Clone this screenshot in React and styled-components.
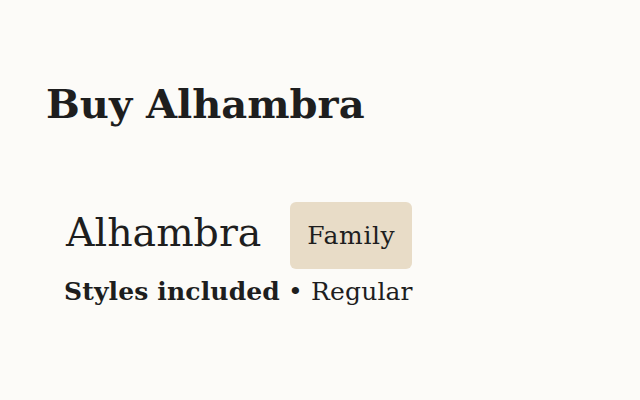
import React from "react";
import styled, { createGlobalStyle } from "styled-components";

const Global = createGlobalStyle`
  html, body {
    margin: 0;
    padding: 0;
    background: #fcfbf8;
  }
  body {
    font-family: "DejaVu Serif", "Liberation Serif", serif;
    color: #1e1e1e;
  }
`;

const Page = styled.main`
  width: 640px;
  height: 400px;
  box-sizing: border-box;
  padding: 80px 46px 0;
`;

const Title = styled.h1`
  margin: 0;
  font-size: 40px;
  line-height: 48px;
  font-weight: 700;
`;

const Product = styled.section`
  margin-top: 74px;
  padding-left: 18px;
  display: flex;
  flex-direction: column;
  gap: 8px;
`;

const NameRow = styled.div`
  display: flex;
  align-items: center;
  gap: 29px;
  margin-left: 2px;
`;

const Name = styled.h2`
  margin: 0 0 8px;
  font-size: 39.5px;
  font-weight: 400;
  line-height: 44px;
`;

const Badge = styled.span`
  display: inline-flex;
  align-items: center;
  justify-content: center;
  height: 67px;
  padding: 0 17px;
  border-radius: 6px;
  background: #e8dcc7;
  font-size: 25px;
  letter-spacing: 0.6px;
`;

const Styles = styled.p`
  margin: 0;
  font-size: 25px;
  line-height: 30px;
  letter-spacing: 0.15px;
`;

const Strong = styled.strong`
  font-weight: 700;
`;

export default function App() {
  return (
    <>
      <Global />
      <Page>
        <Title>Buy Alhambra</Title>
        <Product>
          <NameRow>
            <Name>Alhambra</Name>
            <Badge>Family</Badge>
          </NameRow>
          <Styles>
            <Strong>Styles included</Strong> • Regular
          </Styles>
        </Product>
      </Page>
    </>
  );
}
